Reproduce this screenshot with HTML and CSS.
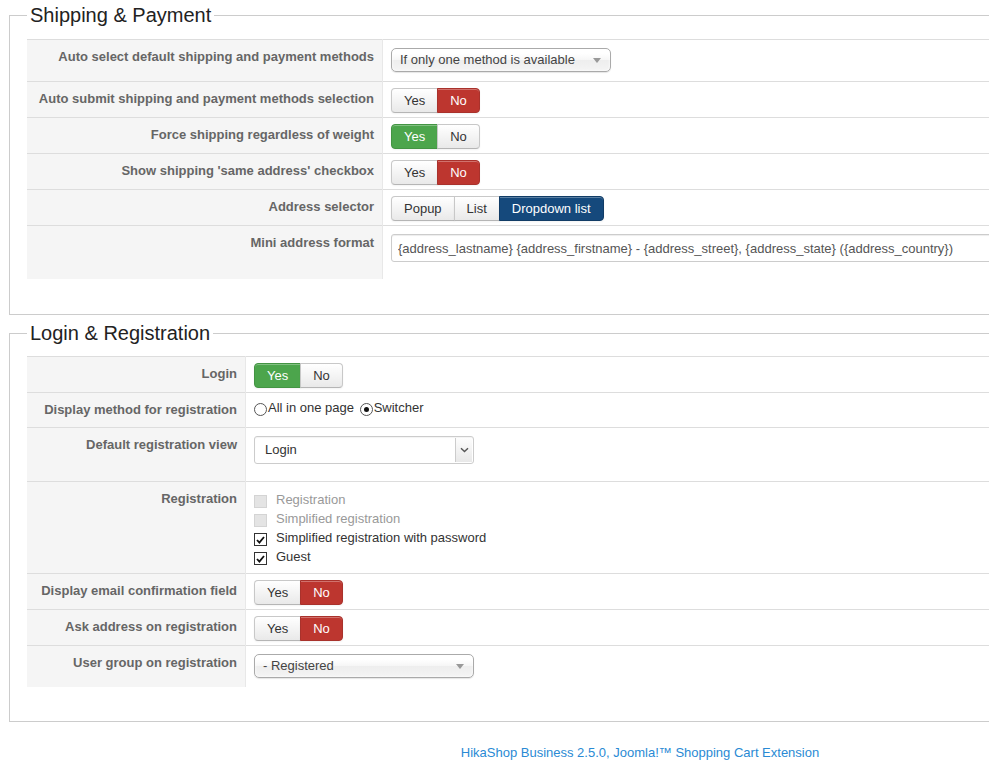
FILE: index.html
```html
<!DOCTYPE html>
<html lang="en">
<head>
    <meta charset="UTF-8">
    <title>HikaShop - Configuration</title>
    <link rel="stylesheet" href="styles.css">
</head>
<body>
<div class="page">

    <fieldset class="adminform">
        <legend>Shipping &amp; Payment</legend>
        <table class="admintable">
            <tr>
                <td class="key key-wide">Auto select default shipping and payment methods</td>
                <td>
                    <div class="chzn-select sel-first">
                        <span>If only one method is available</span>
                        <b class="caret"></b>
                    </div>
                </td>
            </tr>
            <tr>
                <td class="key">Auto submit shipping and payment methods selection</td>
                <td>
                    <div class="btn-group">
                        <span class="btn">Yes</span>
                        <span class="btn btn-danger">No</span>
                    </div>
                </td>
            </tr>
            <tr>
                <td class="key">Force shipping regardless of weight</td>
                <td>
                    <div class="btn-group">
                        <span class="btn btn-success">Yes</span>
                        <span class="btn">No</span>
                    </div>
                </td>
            </tr>
            <tr>
                <td class="key">Show shipping 'same address' checkbox</td>
                <td>
                    <div class="btn-group">
                        <span class="btn">Yes</span>
                        <span class="btn btn-danger">No</span>
                    </div>
                </td>
            </tr>
            <tr>
                <td class="key">Address selector</td>
                <td>
                    <div class="btn-group">
                        <span class="btn">Popup</span>
                        <span class="btn">List</span>
                        <span class="btn btn-primary">Dropdown list</span>
                    </div>
                </td>
            </tr>
            <tr>
                <td class="key">Mini address format</td>
                <td>
                    <input type="text" class="inputbox" value="{address_lastname} {address_firstname} - {address_street}, {address_state} ({address_country})">
                </td>
            </tr>
        </table>
    </fieldset>

    <fieldset class="adminform">
        <legend>Login &amp; Registration</legend>
        <table class="admintable">
            <tr>
                <td class="key key-narrow">Login</td>
                <td>
                    <div class="btn-group">
                        <span class="btn btn-success">Yes</span>
                        <span class="btn">No</span>
                    </div>
                </td>
            </tr>
            <tr>
                <td class="key">Display method for registration</td>
                <td>
                    <div class="radios">
                        <label><span class="radio"></span>All in one page</label>
                        <label><span class="radio checked"></span>Switcher</label>
                    </div>
                </td>
            </tr>
            <tr>
                <td class="key">Default registration view</td>
                <td>
                    <div class="native-select">
                        <span>Login</span>
                        <span class="arrow">
                            <svg width="9" height="6" viewBox="0 0 9 6"><path d="M1 1.2 L4.5 4.6 L8 1.2" fill="none" stroke="#555" stroke-width="1.4"/></svg>
                        </span>
                    </div>
                </td>
            </tr>
            <tr>
                <td class="key">Registration</td>
                <td>
                    <ul class="checklist">
                        <li class="disabled"><span class="check"></span>Registration</li>
                        <li class="disabled"><span class="check"></span>Simplified registration</li>
                        <li><span class="check checked"><svg width="9" height="8" viewBox="0 0 9 8"><path d="M1 4 L3.4 6.6 L8 1" fill="none" stroke="#111" stroke-width="1.8"/></svg></span>Simplified registration with password</li>
                        <li><span class="check checked"><svg width="9" height="8" viewBox="0 0 9 8"><path d="M1 4 L3.4 6.6 L8 1" fill="none" stroke="#111" stroke-width="1.8"/></svg></span>Guest</li>
                    </ul>
                </td>
            </tr>
            <tr>
                <td class="key">Display email confirmation field</td>
                <td>
                    <div class="btn-group">
                        <span class="btn">Yes</span>
                        <span class="btn btn-danger">No</span>
                    </div>
                </td>
            </tr>
            <tr>
                <td class="key">Ask address on registration</td>
                <td>
                    <div class="btn-group">
                        <span class="btn">Yes</span>
                        <span class="btn btn-danger">No</span>
                    </div>
                </td>
            </tr>
            <tr>
                <td class="key">User group on registration</td>
                <td>
                    <div class="chzn-select sel-last">
                        <span>- Registered</span>
                        <b class="caret"></b>
                    </div>
                </td>
            </tr>
        </table>
    </fieldset>

    <div class="footer">
        <a href="#">HikaShop Business 2.5.0, Joomla!&trade; Shopping Cart Extension</a>
    </div>

</div>
</body>
</html>
```

FILE: styles.css
```css
html {
    overflow: hidden;
}

body {
    margin: 0;
    font-family: "Liberation Sans", Arial, sans-serif;
    font-size: 13px;
    color: #333;
    background-color: #fff;
}

.page {
    width: 1280px;
    padding: 3px 9px 0;
    box-sizing: border-box;
}

/* fieldsets */
fieldset.adminform {
    margin: 0;
    padding: 12px 0 35px 17px;
    border: 1px solid #ccc;
}

fieldset.adminform + fieldset.adminform {
    margin-top: 6px;
    padding-top: 11px;
    padding-bottom: 34px;
}

fieldset.adminform legend {
    font-size: 20px;
    line-height: 24px;
    padding: 0 3px;
    color: #222;
}

/* settings table */
.admintable {
    width: 100%;
    border-collapse: collapse;
}

.admintable td {
    border-top: 1px solid #ddd;
    padding: 6px 8px 4px;
    vertical-align: top;
    text-align: left;
    line-height: 18px;
}

.admintable td.key {
    background-color: #f5f5f5;
    border-right: 1px solid #e8e8e8;
    color: #666;
    font-weight: bold;
    text-align: right;
    padding-top: 8px;
    white-space: nowrap;
}

.key-wide {
    width: 339px;
}

.key-narrow {
    width: 202px;
}

/* yes / no buttons */
.btn-group {
    display: inline-flex;
    vertical-align: top;
}

.btn {
    display: inline-block;
    height: 25px;
    box-sizing: border-box;
    padding: 0 12px;
    line-height: 23px;
    font-size: 13px;
    color: #333;
    background: linear-gradient(#fff, #e9e9e9);
    border: 1px solid #c8c8c8;
    border-bottom-color: #b5b5b5;
    box-shadow: inset 0 1px 0 rgba(255, 255, 255, 0.3), 0 1px 2px rgba(0, 0, 0, 0.05);
}

.btn + .btn {
    margin-left: -1px;
}

.btn-group .btn:first-child {
    border-radius: 4px 0 0 4px;
}

.btn-group .btn:last-child {
    border-radius: 0 4px 4px 0;
}

.btn-danger {
    color: #fff;
    background: #bd362f;
    border-color: #a9322c;
}

.btn-success {
    color: #fff;
    background: #4ca54c;
    border-color: #439443;
}

.btn-primary {
    color: #fff;
    background: #15497c;
    border-color: #113c66;
}

/* chosen style dropdowns */
.chzn-select {
    position: relative;
    width: 220px;
    height: 24px;
    box-sizing: border-box;
    margin: 2px 0 5px;
    padding-left: 8px;
    line-height: 22px;
    color: #444;
    border: 1px solid #aaa;
    border-radius: 5px;
    background: linear-gradient(#fff 20%, #f6f6f6 50%, #eee 52%, #f4f4f4 100%);
    box-shadow: inset 0 0 3px #fff, 0 1px 1px rgba(0, 0, 0, 0.1);
}

.chzn-select .caret {
    position: absolute;
    right: 9px;
    top: 9px;
    width: 0;
    height: 0;
    border-left: 4px solid transparent;
    border-right: 4px solid transparent;
    border-top: 5px solid #999;
}

/* plain select box */
.native-select {
    display: flex;
    width: 220px;
    height: 28px;
    box-sizing: border-box;
    margin: 2px 0 13px;
    border: 1px solid #ccc;
    border-radius: 3px;
    background-color: #fff;
    color: #333;
    line-height: 26px;
    box-shadow: inset 0 1px 1px rgba(0, 0, 0, 0.05);
}

.native-select span:first-child {
    flex: 1;
    padding-left: 10px;
}

.native-select .arrow {
    width: 16px;
    margin: 1px;
    border-left: 1px solid #ccc;
    background: linear-gradient(#fdfdfd, #e8e8e8);
    display: flex;
    align-items: center;
    justify-content: center;
}

/* text input */
.inputbox {
    display: block;
    width: 640px;
    height: 28px;
    box-sizing: border-box;
    margin: 2px 0 13px;
    padding: 0 6px;
    font-family: "Liberation Sans", Arial, sans-serif;
    font-size: 13px;
    color: #555;
    border: 1px solid #ccc;
    border-radius: 3px;
    box-shadow: inset 0 1px 1px rgba(0, 0, 0, 0.075);
}

/* radios */
.radios {
    height: 24px;
    line-height: 18px;
}

.radios label {
    margin-right: 2px;
}

.radio {
    display: inline-block;
    width: 11px;
    height: 11px;
    border: 1px solid #555;
    border-radius: 50%;
    background: #fff;
    vertical-align: -4px;
    margin-right: 1px;
    position: relative;
}

.radio.checked::after {
    content: "";
    position: absolute;
    left: 3px;
    top: 3px;
    width: 5px;
    height: 5px;
    border-radius: 50%;
    background: #111;
}

/* checkbox list */
.checklist {
    list-style: none;
    margin: 2px 0 3px;
    padding: 0;
}

.checklist li {
    line-height: 19px;
    height: 19px;
}

.checklist li.disabled {
    color: #999;
}

.check {
    display: inline-block;
    width: 11px;
    height: 11px;
    margin-right: 9px;
    border: 1px solid #333;
    background: #fff;
    vertical-align: -4px;
    position: relative;
}

.check svg {
    position: absolute;
    left: 1px;
    top: 2px;
}

.disabled .check {
    border-color: #d4d4d4;
    background: #e4e4e4;
}

/* footer */
.footer {
    text-align: center;
    margin-top: 22px;
    line-height: 18px;
}

.footer a {
    color: #2a8ad4;
    text-decoration: none;
}
```
